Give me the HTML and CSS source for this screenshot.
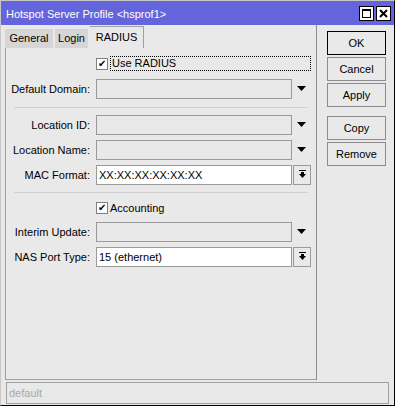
FILE: index.html
```html
<!DOCTYPE html>
<html lang="en">
<head>
  <meta charset="UTF-8" />
  <title>Hotspot Server Profile</title>
  <link rel="stylesheet" href="styles.css">
</head>
<body>
  <div class="window">
    <div class="titlebar">
      <span class="title">Hotspot Server Profile &lt;hsprof1&gt;</span>
      <div class="title-buttons">
        <span class="tbtn"><svg width="11" height="11" viewBox="0 0 11 11"><rect x="1.5" y="1.5" width="8" height="8" fill="none" stroke="#000" stroke-width="1"/><rect x="1" y="1" width="9" height="2" fill="#000"/></svg></span>
        <span class="tbtn"><svg width="11" height="11" viewBox="0 0 11 11"><path d="M2 2 L9 9 M9 2 L2 9" stroke="#000" stroke-width="2"/></svg></span>
      </div>
    </div>
    <div class="content">
      <div class="main">
        <div class="tabs">
          <span class="tab t-general">General</span>
          <span class="tab t-login">Login</span>
          <span class="tab active">RADIUS</span>
        </div>
        <div class="panel">
          <div class="row">
            <span class="label"></span>
            <label class="check"><span class="box">&#10004;</span><span class="focus">Use RADIUS</span></label>
          </div>
          <div class="row">
            <span class="label">Default Domain:</span>
            <span class="field disabled"></span>
            <span class="arrow"><svg width="9" height="5" viewBox="0 0 9 5"><path d="M0 0 H9 L4.5 5 Z" fill="#000"/></svg></span>
          </div>
          <hr class="sep sep-top">
          <div class="row">
            <span class="label">Location ID:</span>
            <span class="field disabled"></span>
            <span class="arrow"><svg width="9" height="5" viewBox="0 0 9 5"><path d="M0 0 H9 L4.5 5 Z" fill="#000"/></svg></span>
          </div>
          <div class="row">
            <span class="label">Location Name:</span>
            <span class="field disabled"></span>
            <span class="arrow"><svg width="9" height="5" viewBox="0 0 9 5"><path d="M0 0 H9 L4.5 5 Z" fill="#000"/></svg></span>
          </div>
          <div class="row">
            <span class="label">MAC Format:</span>
            <span class="field">XX:XX:XX:XX:XX:XX</span>
            <span class="drop"><svg width="9" height="9" viewBox="0 0 9 9"><rect x="1" y="0" width="7" height="1" fill="#000"/><path d="M1 4 H8 L4.5 8 Z" fill="#000"/><rect x="3" y="2" width="3" height="2" fill="#000"/></svg></span>
          </div>
          <hr class="sep sep-bottom">
          <div class="row short">
            <span class="label"></span>
            <label class="check"><span class="box">&#10004;</span>Accounting</label>
          </div>
          <div class="row">
            <span class="label">Interim Update:</span>
            <span class="field disabled"></span>
            <span class="arrow"><svg width="9" height="5" viewBox="0 0 9 5"><path d="M0 0 H9 L4.5 5 Z" fill="#000"/></svg></span>
          </div>
          <div class="row">
            <span class="label">NAS Port Type:</span>
            <span class="field">15 (ethernet)</span>
            <span class="drop"><svg width="9" height="9" viewBox="0 0 9 9"><rect x="1" y="0" width="7" height="1" fill="#000"/><path d="M1 4 H8 L4.5 8 Z" fill="#000"/><rect x="3" y="2" width="3" height="2" fill="#000"/></svg></span>
          </div>
        </div>
      </div>
      <div class="side">
        <button class="btn default">OK</button>
        <button class="btn">Cancel</button>
        <button class="btn">Apply</button>
        <button class="btn gap">Copy</button>
        <button class="btn">Remove</button>
      </div>
    </div>
    <div class="status">default</div>
  </div>
</body>
</html>
```

FILE: styles.css
```css
body {
  margin: 0;
  background: #ffffff;
  font-family: 'Liberation Sans', Arial, sans-serif;
  font-size: 11px;
  color: #000;
}
.window {
  width: 393px;
  height: 404px;
  background: #e9e9e9;
  border-left: 1px solid #c8c8c8;
  border-top: 1px solid #c8c8c8;
  border-right: 1px solid #000;
  border-bottom: 1px solid #000;
  display: flex;
  flex-direction: column;
}
.titlebar {
  height: 24px;
  flex: none;
  background: #6464dc;
  color: #fff;
  display: flex;
  align-items: center;
  justify-content: space-between;
  padding: 0 3px 0 5px;
}
.title {
  font-size: 11px;
  padding-top: 1px;
}
.title-buttons {
  display: flex;
  gap: 2px;
}
.tbtn {
  width: 13px;
  height: 13px;
  background: #fff;
  border: 1px solid #000;
  display: flex;
  align-items: center;
  justify-content: center;
}
.content {
  display: flex;
  height: 355px;
  flex: none;
}
.main {
  width: 311px;
  padding-left: 4px;
  border-right: 1px solid #8c8c8c;
  display: flex;
  flex-direction: column;
}
.tabs {
  display: flex;
  align-items: flex-end;
  height: 23px;
  gap: 2px;
}
.tab {
  height: 19px;
  line-height: 19px;
  text-align: center;
  background: #d6d6d6;
}
.t-general {
  width: 48px;
}
.t-login {
  width: 33px;
}
.tab.active {
  width: 53px;
  height: 21px;
  line-height: 20px;
  background: #e9e9e9;
  border: 1px solid #a0a0a0;
  border-bottom: none;
  border-left: none;
}
.panel {
  flex: 1;
  border: 1px solid #a0a0a0;
  border-top: none;
  border-right: none;
  padding-top: 3px;
}
.row {
  display: flex;
  align-items: center;
  height: 25px;
}
.row.short {
  height: 23px;
}
.label {
  width: 84px;
  text-align: right;
  padding-right: 6px;
  flex: none;
}
.field {
  width: 192px;
  height: 18px;
  line-height: 18px;
  border: 1px solid #9a9a9a;
  background: #fff;
  padding-left: 2px;
  flex: none;
}
.field.disabled {
  background: #e9e9e9;
}
.arrow {
  width: 19px;
  display: flex;
  justify-content: center;
}
.drop {
  width: 16px;
  height: 18px;
  margin-left: 1px;
  border: 1px solid #9a9a9a;
  display: flex;
  align-items: center;
  justify-content: center;
}
.check {
  display: flex;
  align-items: center;
}
.focus {
  width: 198px;
  height: 13px;
  line-height: 13px;
  border: 1px dotted #000;
  padding-left: 1px;
}
.box {
  width: 10px;
  height: 10px;
  border: 1px solid #808080;
  background: #fff;
  font-size: 10px;
  line-height: 10px;
  text-align: center;
  margin-right: 2px;
}
.sep {
  border: none;
  border-top: 1px solid #d0d0d0;
  margin: 0 8px;
}
.sep-top {
  margin-top: 6px;
  margin-bottom: 4px;
}
.sep-bottom {
  margin-top: 5px;
  margin-bottom: 3px;
}
.side {
  display: flex;
  flex-direction: column;
  padding: 6px 0 0 10px;
  gap: 2px;
}
.btn {
  width: 59px;
  height: 24px;
  font-family: 'Liberation Sans', Arial, sans-serif;
  font-size: 11px;
  background: #e9e9e9;
  border: 1px solid #8c8c8c;
  padding: 0;
}
.btn.default {
  border: 1px solid #000;
}
.btn.gap {
  margin-top: 7px;
}
.status {
  height: 20px;
  line-height: 20px;
  margin: 2px 5px 1px 5px;
  border: 1px solid #a0a0a0;
  color: #a8a8a8;
  padding-left: 2px;
}
```
